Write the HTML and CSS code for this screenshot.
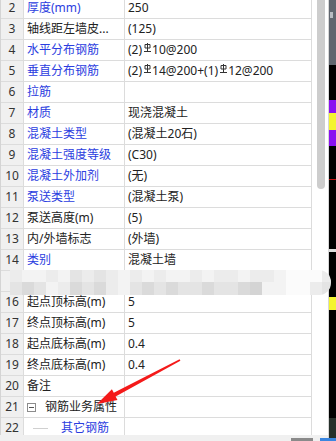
FILE: index.html
```html
<!DOCTYPE html>
<html lang="zh-CN">

<head>
    <meta charset="UTF-8">
    <meta name="viewport" content="width=device-width, initial-scale=1.0">
    <link rel="stylesheet" href="styles.css">
    <title>属性列表</title>
</head>

<body>
    <div class="screen">
        <div class="panel">
            <div class="content">
                <div class="props">
                    <div class="num">2</div><div class="name blue">厚度(mm)</div><div class="val">250</div>
                    <div class="num">3</div><div class="name">轴线距左墙皮...</div><div class="val">(125)</div>
                    <div class="num">4</div><div class="name blue">水平分布钢筋</div><div class="val">(2)<svg class="bar" viewBox="0 0 7 10"><path d="M3.5 0V9M1 1.5h5v3.5H1zM0 8.5h7"/></svg>10@200</div>
                    <div class="num">5</div><div class="name blue">垂直分布钢筋</div><div class="val">(2)<svg class="bar" viewBox="0 0 7 10"><path d="M3.5 0V9M1 1.5h5v3.5H1zM0 8.5h7"/></svg>14@200+(1)<svg class="bar" viewBox="0 0 7 10"><path d="M3.5 0V9M1 1.5h5v3.5H1zM0 8.5h7"/></svg>12@200</div>
                    <div class="num">6</div><div class="name blue">拉筋</div><div class="val"></div>
                    <div class="num">7</div><div class="name blue">材质</div><div class="val">现浇混凝土</div>
                    <div class="num">8</div><div class="name blue">混凝土类型</div><div class="val">(混凝土20石)</div>
                    <div class="num">9</div><div class="name blue">混凝土强度等级</div><div class="val">(C30)</div>
                    <div class="num">10</div><div class="name blue">混凝土外加剂</div><div class="val">(无)</div>
                    <div class="num">11</div><div class="name blue">泵送类型</div><div class="val">(混凝土泵)</div>
                    <div class="num">12</div><div class="name">泵送高度(m)</div><div class="val">(5)</div>
                    <div class="num">13</div><div class="name">内/外墙标志</div><div class="val">(外墙)</div>
                    <div class="num">14</div><div class="name blue">类别</div><div class="val">混凝土墙</div>
                    <div class="num"></div><div class="name"></div><div class="val"></div>
                    <div class="num">16</div><div class="name">起点顶标高(m)</div><div class="val">5</div>
                    <div class="num">17</div><div class="name">终点顶标高(m)</div><div class="val">5</div>
                    <div class="num">18</div><div class="name">起点底标高(m)</div><div class="val">0.4</div>
                    <div class="num">19</div><div class="name">终点底标高(m)</div><div class="val">0.4</div>
                    <div class="num">20</div><div class="name">备注</div><div class="val"></div>
                    <div class="num">21</div><div class="name"><span class="fold"></span>钢筋业务属性</div><div class="val"></div>
                    <div class="num">22</div><div class="name blue"><span class="branch"></span>其它钢筋</div><div class="val"></div>
                </div>
                <div class="scroll">
                    <div class="thumb"></div>
                </div>
            </div>
            <div class="status"></div>
        </div>
        <div class="desktop">
            <div class="d-gray"><span class="d-mark"></span></div>
            <div class="d-black" style="height: 35px;"></div>
            <div class="d-purple" style="height: 13px;"></div>
            <div class="d-yellow" style="height: 17px;"></div>
            <div class="d-purple" style="height: 16px;"></div>
            <div class="d-black" style="height: 33px;"></div>
            <div class="d-red"></div>
            <div class="d-black" style="height: 69px;"></div>
            <div class="d-white"></div>
            <div class="d-black" style="height: 45px;"></div>
            <div class="d-yellow" style="height: 13px;"></div>
            <div class="d-black" style="height: 108px;"></div>
            <div class="d-green"></div>
        </div>
    </div>

    <!-- blurred row -->
    <div class="mosaic">
        <div class="m2"></div><div class="m1"></div><div class="m1"></div><div class="m2"></div><div class="m1"></div><div class="m3"></div><div class="m2"></div><div class="m3"></div><div class="m2"></div><div class="m1"></div><div class="m2"></div><div class="m1"></div><div class="m2"></div><div class="m1"></div><div class="m1"></div><div class="m2"></div><div class="m1"></div><div class="m2"></div><div class="m2"></div><div class="m1"></div><div class="m2"></div><div class="m2"></div><div class="m1"></div><div class="m0"></div><div class="m0"></div><div class="m0"></div><div class="m2"></div>
        <div class="m3"></div><div class="m4"></div><div class="m3"></div><div class="m1"></div><div class="m2"></div><div class="m4"></div><div class="m3"></div><div class="m4"></div><div class="m2"></div><div class="m1"></div><div class="m3"></div><div class="m4"></div><div class="m3"></div><div class="m4"></div><div class="m3"></div><div class="m3"></div><div class="m4"></div><div class="m3"></div><div class="m3"></div><div class="m4"></div><div class="m5"></div><div class="m1"></div><div class="m1"></div><div class="m0"></div><div class="m0"></div><div class="m2"></div><div class="m3"></div>
    </div>

    <svg class="arrow" viewBox="0 0 336 441">
        <polygon points="179.6,359.3 113.8,392.8 111.9,389.3 97,404 117.5,399.9 115.6,396.4 180.4,360.7" />
    </svg>

    <div class="taskbar">
        <span class="task-gray"></span>
        <span class="task-blue"></span>
    </div>
</body>

</html>
```

FILE: styles.css
```css
body {
    margin: 0;
    width: 336px;
    height: 441px;
    overflow: hidden;
    position: relative;
    font-family: "Noto Sans", "Noto Sans CJK SC", sans-serif;
    font-size: 12px;
    color: #222;
}

.screen {
    display: flex;
    height: 441px;
}

.panel {
    width: 328px;
    border-right: 1px solid #d6d6d6;
    background: #fff;
    display: flex;
    flex-direction: column;
}

.content {
    display: flex;
    height: 435px;
    overflow: hidden;
}

.props {
    display: grid;
    grid-template-columns: 23px 101px 187px;
    grid-auto-rows: 21px;
    border-left: 1px solid #d4d4d4;
    margin-top: -2px;
    align-self: flex-start;
}

.props > div {
    box-sizing: border-box;
    border-right: 1px solid #dcdcdc;
    border-bottom: 1px solid #dcdcdc;
    line-height: 20px;
    white-space: nowrap;
    overflow: hidden;
}

.num {
    background: #f0f0f0;
    text-align: center;
    color: #333;
}

.name,
.val {
    padding-left: 3px;
    display: flex;
    align-items: center;
}

.blue {
    color: #2b3de0;
}

.bar {
    width: 7px;
    height: 10px;
    margin: 0 1px 4px 2px;
    fill: none;
    stroke: #333;
    stroke-width: 1;
}

.fold {
    box-sizing: border-box;
    width: 9px;
    height: 9px;
    border: 1px solid #8c8c8c;
    margin: 0 9px 0 0;
    position: relative;
}

.fold::after {
    content: "";
    position: absolute;
    left: 1px;
    right: 1px;
    top: 3px;
    height: 1px;
    background: #555;
}

.branch {
    width: 15px;
    height: 1px;
    background: #d0d0d0;
    margin: 0 13px 0 6px;
}

.scroll {
    width: 17px;
    padding-left: 5px;
}

.thumb {
    width: 8px;
    height: 189px;
    background: #cdcdcd;
    border-radius: 0 0 4px 4px;
}

.status {
    flex: 1;
    background: #f0f0f0;
}

.desktop {
    flex: 1;
    display: flex;
    flex-direction: column;
    background: #000;
}

.d-gray {
    height: 65px;
    background: #60666f;
    position: relative;
}

.d-mark {
    position: absolute;
    left: 1px;
    top: 12px;
    width: 3px;
    height: 6px;
    background: #b8bcc2;
}

.d-black {
    background: #000;
}

.d-purple {
    background: #8a10f0;
}

.d-yellow {
    background: #f4f430;
}

.d-red {
    height: 1px;
    background: #c01010;
}

.d-white {
    height: 3px;
    background: #ddd;
}

.d-green {
    flex: 1;
    background: #26302a;
}

.mosaic {
    position: absolute;
    left: 10px;
    top: 270px;
    width: 321px;
    height: 25px;
    display: grid;
    grid-template-columns: repeat(27, 12px);
    grid-template-rows: 12px 13px;
    border-radius: 0 12px 12px 0;
    overflow: hidden;
}

.m0 { background: #fbfbfb; }
.m1 { background: #f3f3f3; }
.m2 { background: #ececec; }
.m3 { background: #e4e4e4; }
.m4 { background: #dadada; }
.m5 { background: #d4d4d4; }

.arrow {
    position: absolute;
    left: 0;
    top: 0;
    width: 336px;
    height: 441px;
    pointer-events: none;
}

.arrow polygon {
    fill: #f41a1a;
}

.taskbar {
    position: absolute;
    left: 0;
    right: 0;
    bottom: 0;
    height: 3px;
}

.task-gray {
    position: absolute;
    left: 291px;
    width: 22px;
    height: 3px;
    background: #8a8a8a;
}

.task-blue {
    position: absolute;
    left: 320px;
    width: 16px;
    height: 3px;
    background: #3a86e0;
}
```
